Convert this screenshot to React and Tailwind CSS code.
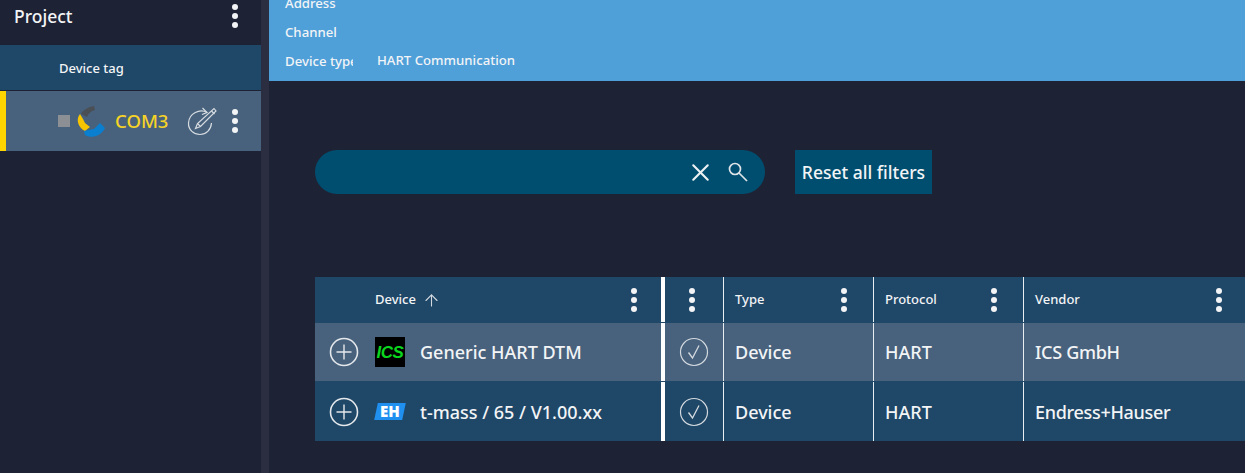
import React from "react";
import { ArrowUp, X } from "lucide-react";

function Dots({ className = "" }) {
  return (
    <div className={"flex flex-col gap-[3px] " + className}>
      <span className="w-[6px] h-[6px] rounded-full bg-[#f2f4f6]" />
      <span className="w-[6px] h-[6px] rounded-full bg-[#f2f4f6]" />
      <span className="w-[6px] h-[6px] rounded-full bg-[#f2f4f6]" />
    </div>
  );
}

function PlusCircle() {
  return (
    <svg width="30" height="30" viewBox="0 0 30 30" fill="none" stroke="#e4e8ec">
      <circle cx="15" cy="15" r="13.5" strokeWidth="1.6" />
      <path d="M15 7.5v15M7.5 15h15" strokeWidth="1.4" />
    </svg>
  );
}

function CheckCircle() {
  return (
    <svg width="30" height="30" viewBox="0 0 30 30" fill="none" stroke="#d3d9df">
      <circle cx="15" cy="15" r="13.5" strokeWidth="1.2" />
      <path d="M9.5 15.5l4 5.5 6.5-12.5" strokeWidth="1.3" />
    </svg>
  );
}

function SearchIcon() {
  return (
    <svg width="22" height="22" viewBox="0 0 22 22" fill="none" stroke="#dfe4e8" strokeWidth="1.7">
      <circle cx="8" cy="8" r="5.5" />
      <path d="M12 12l8 8" />
    </svg>
  );
}

function ComIcon() {
  return (
    <svg width="32" height="32" viewBox="0 0 32 32" fill="none">
      <path d="M20 1l1 4c-4 1-7 4-8 7L7 9c2-4 7-7 13-8z" fill="#4a4f55" />
      <path d="M6 9l3 5 2 4 5 4-5 4C5 23 1 15 6 9z" fill="#f6c400" />
      <path d="M10 26l10-2 6-6 5 5c-4 8-13 11-20 7z" fill="#0a7fd0" />
    </svg>
  );
}

function EditIcon() {
  return (
    <svg width="32" height="32" viewBox="0 0 32 32" fill="none" stroke="#d8dde2" strokeWidth="1.2">
      <path d="M22 7.5C15 3.5 4 8 3.5 18c-.3 7 5.5 11.5 11.5 11.5S26 25 26.5 18" />
      <path d="M17.5 3l4.5 4.5-5 2" />
      <path d="M29 3.5l2 2.5L15.5 21.5l-5 2 2-5z" />
      <path d="M12.5 18.5l3 3M26.5 6l3 3" />
    </svg>
  );
}

function IcsLogo() {
  return (
    <div className="w-[30px] h-[30px] bg-black flex items-center justify-center">
      <span className="text-[#0bd51f] text-[17px] font-black italic leading-none tracking-[-0.5px] font-['Liberation_Sans',sans-serif]">ICS</span>
    </div>
  );
}

function EhLogo() {
  return (
    <div className="w-[28px] h-[17px] bg-[#1f8ff0] flex items-center justify-center -skew-x-12">
      <span className="text-white text-[15px] font-black leading-none skew-x-12">EH</span>
    </div>
  );
}

const cols = "grid grid-cols-[346px_62px_150px_150px_222px]";

function HeaderCell({ label, right = "pr-[26px]" }) {
  return (
    <div className={"border-l-[1.5px] border-[#e8edf1] flex items-center justify-between pl-[11px] text-[13px] font-medium " + right}>
      <span className="mt-px">{label}</span>
      <Dots />
    </div>
  );
}

function Row({ logo, name, vendor, bg, textTop = "" }) {
  return (
    <div className={cols + " text-[18px] font-medium " + bg}>
      <div className="flex items-center pl-[14px]">
        <PlusCircle />
        <div className="w-[30px] ml-[16px] flex justify-center">{logo}</div>
        <span className={"ml-[15px] " + textTop}>{name}</span>
      </div>
      <div className="border-l-4 border-white flex items-center justify-center">
        <CheckCircle />
      </div>
      <div className="border-l-[1.5px] border-[#e8edf1] flex items-center pl-[11px]">
        <span className={textTop}>Device</span>
      </div>
      <div className="border-l-[1.5px] border-[#e8edf1] flex items-center pl-[11px]">
        <span className={textTop}>HART</span>
      </div>
      <div className="border-l-[1.5px] border-[#e8edf1] flex items-center pl-[11px]">
        <span className={"tracking-[-0.3px] " + textTop}>{vendor}</span>
      </div>
    </div>
  );
}

export default function App() {
  return (
    <div className="flex w-[1245px] h-[473px] overflow-hidden bg-[#1e2235] text-[#f2f4f6] font-['Noto_Sans',sans-serif]">
      <aside className="w-[261px] shrink-0">
        <div className="h-[45px] flex items-center justify-between pl-[14px] pr-[23px]">
          <span className="text-[17.5px] font-medium -mt-[13px]">Project</span>
          <Dots className="-mt-[14px]" />
        </div>
        <div className="h-[45px] bg-[#1f4767] flex items-center pl-[59px] text-[13px] font-medium">
          <span className="mt-[3px]">Device tag</span>
        </div>
        <div className="h-[60px] mt-px bg-[#48627d] border-l-[6px] border-[#ffd500] flex items-center pl-[52px] pr-[23px]">
          <span className="w-[12px] h-[12px] bg-[#8c9094]" />
          <div className="ml-[4px]">
            <ComIcon />
          </div>
          <span className="ml-[9px] text-[18.5px] font-medium text-[#f6d327]">COM3</span>
          <div className="ml-auto mr-[15px]">
            <EditIcon />
          </div>
          <Dots />
        </div>
      </aside>

      <div className="w-[8px] shrink-0 bg-[#2a2e40]" />

      <main className="flex-1 min-w-0">
        <div className="h-[81px] bg-[#4f9fd9] overflow-hidden pl-[16px] text-[13.2px] font-medium">
          <div className="-mt-[11px] flex flex-col">
            <div className="h-[29px] flex items-center">Address</div>
            <div className="h-[29px] flex items-center">Channel</div>
            <div className="h-[29px] flex items-center">
              <span className="w-[68px] overflow-hidden whitespace-nowrap">Device type</span>
              <span className="ml-[24px] -mt-[2px]">HART Communication</span>
            </div>
          </div>
        </div>

        <div className="pl-[46px] pt-[69px]">
          <div className="flex gap-[30px]">
            <div className="w-[450px] h-[44px] rounded-full bg-[#004e6f] flex items-center justify-end pr-[16px] gap-[12px]">
              <X size={29} strokeWidth={1.7} className="text-[#eef1f3]" />
              <SearchIcon />
            </div>
            <button className="w-[137px] h-[44px] bg-[#004e6f] text-[17.5px] font-medium">Reset all filters</button>
          </div>

          <div className="mt-[83px] w-[930px] flex flex-col">
            <div className={cols + " h-[45px] bg-[#1f4767]"}>
              <div className="flex items-center justify-between pl-[60px] pr-[24px] text-[13px] font-medium">
                <span className="flex items-center gap-[6px] mt-px">
                  Device
                  <ArrowUp size={19} strokeWidth={1.4} className="text-[#d3d9df]" />
                </span>
                <Dots />
              </div>
              <div className="border-l-4 border-white flex items-center justify-center pr-[4px]">
                <Dots />
              </div>
              <HeaderCell label="Type" />
              <HeaderCell label="Protocol" />
              <HeaderCell label="Vendor" right="pr-[23px]" />
            </div>
            <div className="h-px bg-[#1f4767]" />
            <Row bg="h-[58px] bg-[#48627d]" logo={<IcsLogo />} name="Generic HART DTM" vendor="ICS GmbH" />
            <div className="h-px bg-[#1f4767]" />
            <Row bg="h-[59px] bg-[#1f4767]" textTop="mt-[2px]" logo={<EhLogo />} name="t-mass / 65 / V1.00.xx" vendor="Endress+Hauser" />
          </div>
        </div>
      </main>
    </div>
  );
}
